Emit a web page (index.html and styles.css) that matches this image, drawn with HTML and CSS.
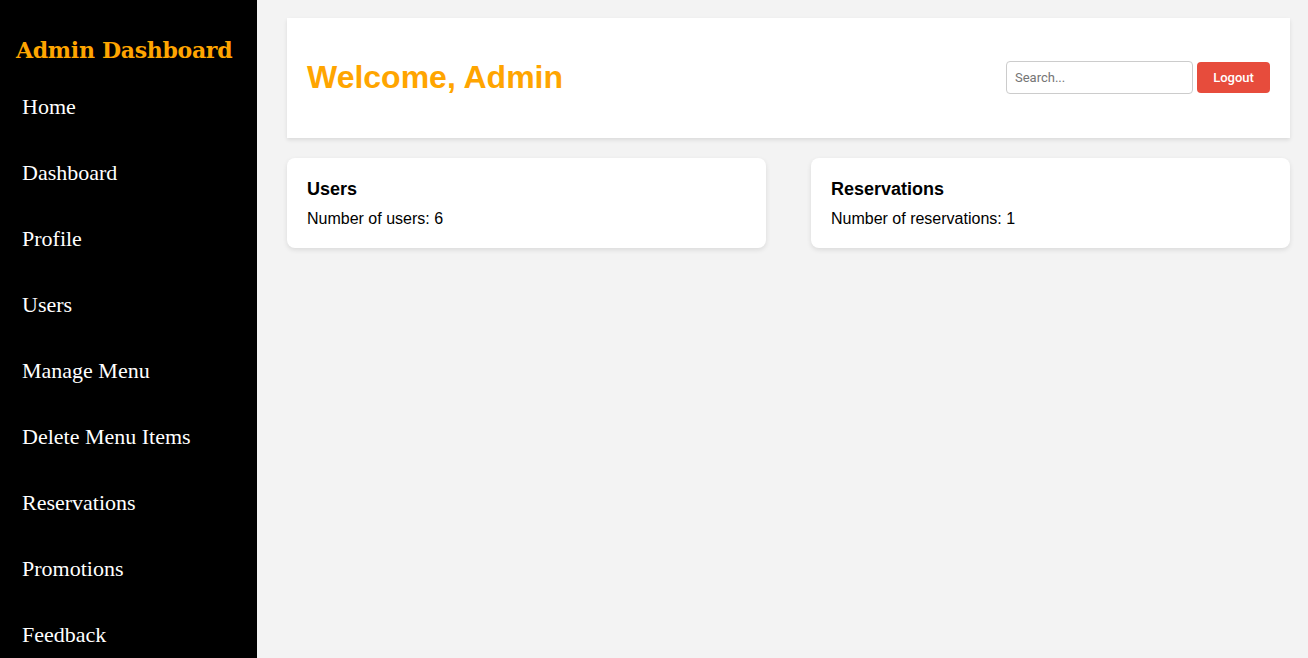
FILE: index.html
```html
<!DOCTYPE html>
<html>
<head>
<meta charset="utf-8">
<link rel="stylesheet" href="styles.css">
</head>
<body>
<div class="layout">
  <aside class="sidebar">
    <h2 class="brand">Admin Dashboard</h2>
    <nav class="nav">
      <a href="#">Home</a>
      <a href="#">Dashboard</a>
      <a href="#">Profile</a>
      <a href="#">Users</a>
      <a href="#">Manage Menu</a>
      <a href="#">Delete Menu Items</a>
      <a href="#">Reservations</a>
      <a href="#">Promotions</a>
      <a href="#">Feedback</a>
    </nav>
  </aside>
  <main class="main">
    <header class="topbar">
      <h1 class="welcome">Welcome, Admin</h1>
      <div class="actions">
        <input class="search" type="text" placeholder="Search...">
        <button class="logout">Logout</button>
      </div>
    </header>
    <section class="cards">
      <div class="card">
        <h3>Users</h3>
        <p>Number of users: 6</p>
      </div>
      <div class="card">
        <h3>Reservations</h3>
        <p>Number of reservations: 1</p>
      </div>
    </section>
  </main>
</div>
</body>
</html>
```
FILE: styles.css
```css
* { box-sizing: border-box; }
html, body { margin: 0; padding: 0; height: 100%; }
body {
  background: #f3f3f3;
  font-family: "Liberation Sans", Arial, sans-serif;
  overflow: hidden;
}
.layout { display: flex; height: 658px; }
.sidebar {
  width: 257px;
  flex: none;
  background: #000;
  padding: 36px 0 0 0;
}
.brand {
  margin: 0 0 28px 16px;
  font-family: "DejaVu Serif", serif;
  font-weight: bold;
  font-size: 22px;
  color: #ffa500;
  line-height: 28px;
  letter-spacing: -0.3px;
}
.nav { display: flex; flex-direction: column; }
.nav a {
  font-family: "Liberation Serif", "Times New Roman", serif;
  font-size: 22px;
  color: #fff;
  text-decoration: none;
  padding: 0 22px;
  height: 66px;
  line-height: 30px;
  flex: none;
}
.main {
  flex: 1;
  padding: 18px 18px 0 30px;
  display: flex;
  flex-direction: column;
  gap: 20px;
}
.topbar {
  background: #fff;
  height: 120px;
  display: flex;
  align-items: center;
  justify-content: space-between;
  padding: 0 20px 2px 20px;
  box-shadow: 0 2px 4px rgba(0,0,0,0.1);
}
.welcome {
  margin: 0;
  font-size: 32px;
  font-weight: bold;
  color: #ffa500;
}
.actions { display: flex; align-items: center; gap: 4px; }
.search {
  width: 187px;
  height: 33px;
  border: 1px solid #ccc;
  border-radius: 4px;
  padding: 0 8px;
  font-family: "Roboto", "Liberation Sans", sans-serif;
  font-size: 13px;
  color: #333;
}
.search::placeholder { color: #757575; }
.logout {
  width: 73px;
  height: 31px;
  border: none;
  border-radius: 4px;
  background: #e74c3c;
  color: #fff;
  font-family: "Roboto", "Liberation Sans", sans-serif;
  font-weight: 500;
  font-size: 13px;
}
.cards {
  display: grid;
  grid-template-columns: 1fr 1fr;
  gap: 45px;
}
.card {
  background: #fff;
  border-radius: 8px;
  height: 90px;
  padding: 21px 20px 20px 20px;
  box-shadow: 0 2px 5px rgba(0,0,0,0.1);
}
.card h3 {
  margin: 0 0 10px 0;
  font-size: 18px;
  line-height: 21px;
}
.card p {
  margin: 0;
  font-size: 16px;
  line-height: 18px;
}
```
